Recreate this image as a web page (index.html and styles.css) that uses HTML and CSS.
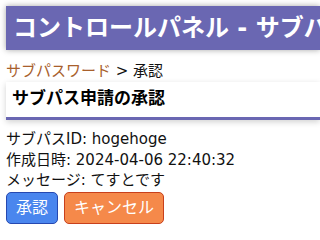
FILE: index.html
```html
<!DOCTYPE html>
<html lang="ja">
<head>
<meta charset="utf-8">
<link rel="stylesheet" href="styles.css">
</head>
<body>
<div class="page">
  <header class="topbar"><h1 class="title">コントロールパネル - サブパスワード管理</h1></header>
  <nav class="crumbs"><a class="crumb-link" href="#">サブパスワード</a> &gt; 承認</nav>
  <section class="card"><h2 class="card-title">サブパス申請の承認</h2></section>
  <div class="details">
    <div class="row">サブパスID: hogehoge</div>
    <div class="row">作成日時: 2024-04-06 22:40:32</div>
    <div class="row">メッセージ: てすとです</div>
  </div>
  <div class="actions">
    <button class="btn btn-approve">承認</button>
    <button class="btn btn-cancel">キャンセル</button>
  </div>
</div>
</body>
</html>
```

FILE: styles.css
```css
html, body {
  margin: 0;
  padding: 0;
  overflow: hidden;
  background: #fff;
}
body {
  font-family: "DejaVu Sans", "Noto Sans CJK JP", sans-serif;
  color: #111;
}
.page {
  padding: 6px 0 0 6px;
  overflow: hidden;
}
.topbar {
  background: #6a67b2;
  height: 44px;
  box-shadow: 0 0 6px rgba(0,0,0,0.35);
  overflow: hidden;
}
.title {
  margin: 0;
  padding-left: 7px;
  color: #fff;
  font-size: 24px;
  font-weight: bold;
  line-height: 44px;
  white-space: nowrap;
  overflow: hidden;
  text-overflow: clip;
}
.crumbs {
  margin-top: 11px;
  font-size: 15px;
  line-height: 21px;
}
.crumb-link {
  color: #a8602c;
  text-decoration: none;
}
.card {
  background: #fff;
  border-bottom: 3px solid #6a67b2;
  box-shadow: 0 2px 6px rgba(0,0,0,0.18);
  height: 35px;
}
.card-title {
  margin: 0;
  padding-left: 6px;
  font-size: 17px;
  font-weight: bold;
  line-height: 33px;
  color: #000;
}
.details {
  margin-top: 9px;
  font-size: 15px;
  line-height: 20.5px;
}
.actions {
  display: flex;
  gap: 6px;
  margin-top: 1px;
}
.btn {
  font-family: "DejaVu Sans", "Noto Sans CJK JP", sans-serif;
  font-size: 16px;
  line-height: 20px;
  color: #fff;
  padding: 5px 9px;
  border-radius: 5px;
  height: 32px;
}
.btn-approve {
  background: #4a86ee;
  border: 1px solid #2648b0;
}
.btn-cancel {
  background: #f5894a;
  border: 1px solid #c8401c;
}
```
